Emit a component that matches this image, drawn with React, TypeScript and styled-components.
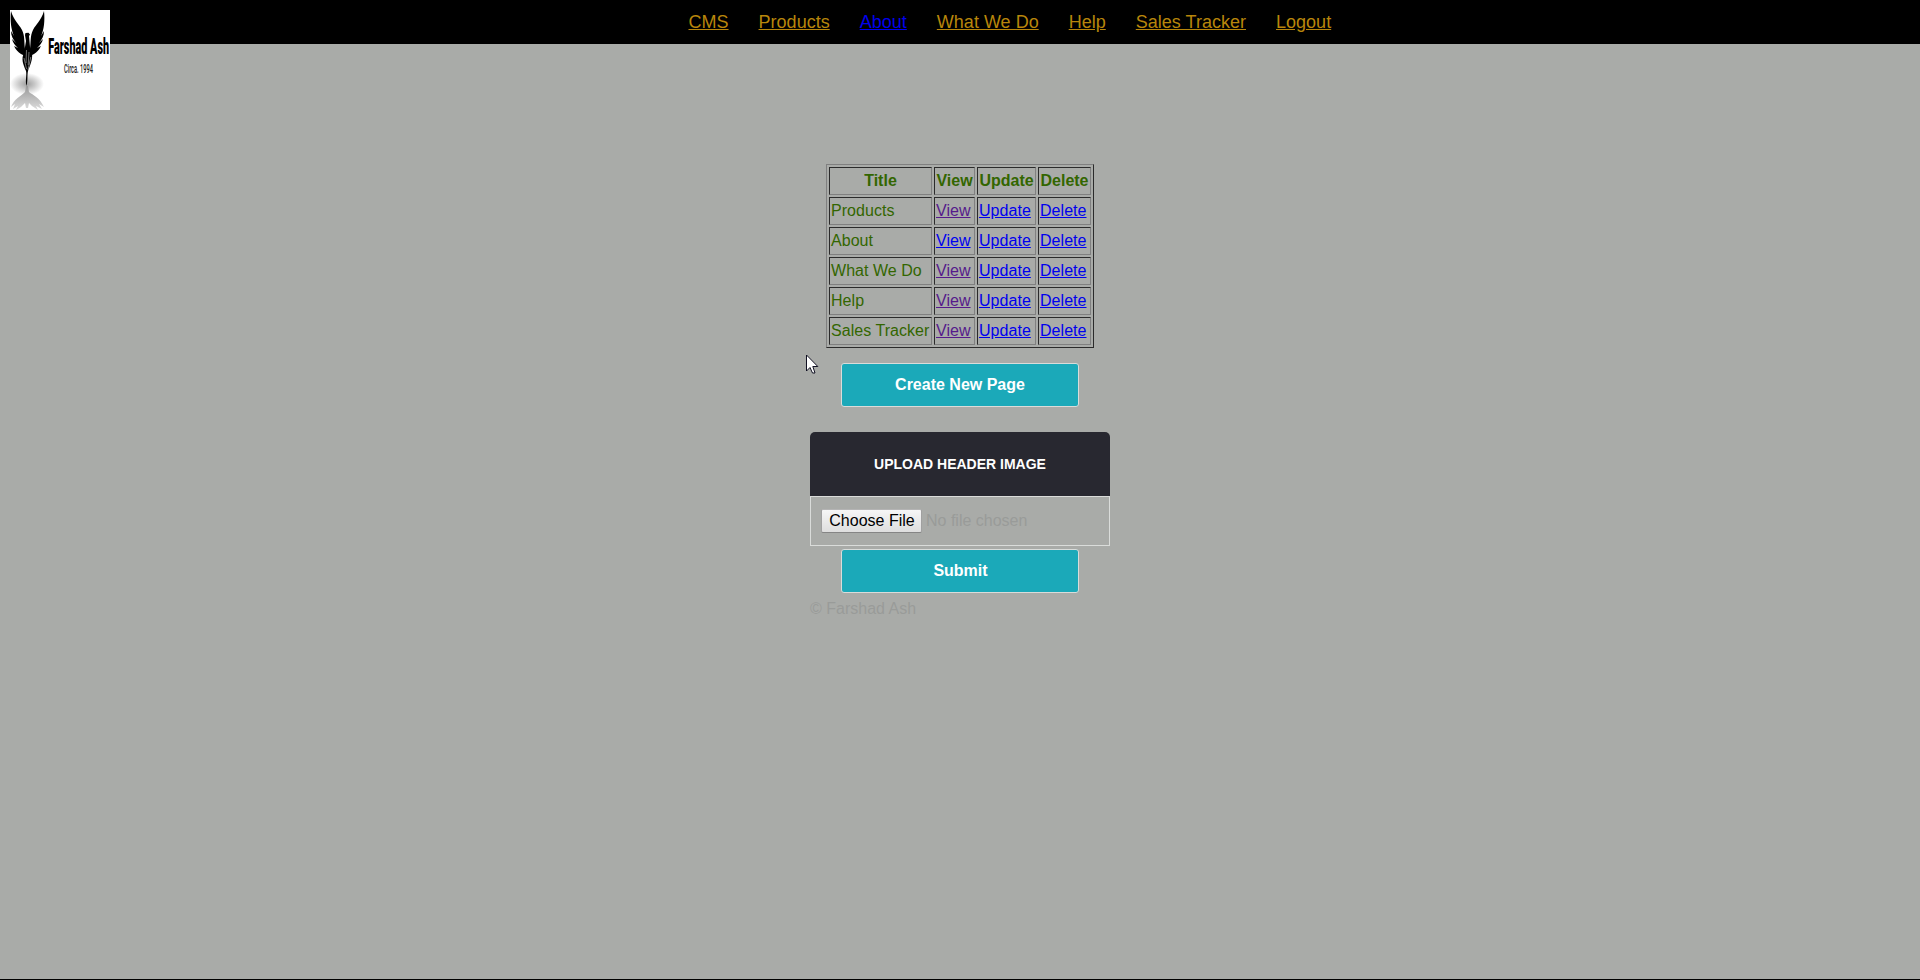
import React from "react";
import styled, { createGlobalStyle } from "styled-components";

const GlobalStyle = createGlobalStyle`
  html { background: #000; }
  body {
    margin: 0;
    font: 16px/24px "Liberation Sans", Arial, sans-serif;
    color: #999b99;
  }
`;

const Page = styled.div`
  position: relative;
  height: 979px;
  background: #a9aba8;
  overflow: hidden;
`;

const Header = styled.header`
  height: 44px;
  box-sizing: border-box;
  padding-left: 688.5px;
  background: #000;
`;

const Nav = styled.nav`
  display: flex;
  gap: 30px;
  font-size: 18px;
  line-height: 44px;
`;

const NavLink = styled.a<{ $active?: boolean }>`
  color: ${(p) => (p.$active ? "#0000ee" : "#b8860b")};
  text-decoration: underline;
  white-space: nowrap;
  letter-spacing: 0.015px;
`;

const Logo = styled.svg`
  position: absolute;
  left: 10px;
  top: 10px;
  width: 100px;
  height: 100px;
`;

const Main = styled.main`
  width: 300px;
  margin: 120px auto 0;
  display: flex;
  flex-direction: column;
  align-items: center;
`;

const Table = styled.table`
  border-collapse: separate;
  border-spacing: 2px;
  table-layout: fixed;
  width: 268px;
  border: 1px solid;
  border-color: #808080 #2b2b2b #2b2b2b #808080;
  color: #336600;
`;

const cellBorder = `
  padding: 1px;
  border: 1px solid;
  border-color: #2b2b2b #808080 #808080 #2b2b2b;
  line-height: 24px;
  white-space: nowrap;
`;

const HeadCell = styled.th<{ $width: number }>`
  ${cellBorder}
  box-sizing: border-box;
  width: ${(p) => p.$width}px;
  text-align: center;
`;

const Cell = styled.td`
  ${cellBorder}
  letter-spacing: 0.04px;
`;

const CellLink = styled.a<{ $visited?: boolean }>`
  color: ${(p) => (p.$visited ? "#551a8b" : "#0000ee")};
  text-decoration: underline;
`;

const Button = styled.button`
  box-sizing: border-box;
  width: 238px;
  height: 44px;
  padding: 0;
  border: 1px solid #dadcda;
  border-radius: 3px;
  background: #1ba9b9;
  color: #fff;
  font: bold 16px/24px "Liberation Sans", Arial, sans-serif;
`;

const CreateButton = styled(Button)`
  margin-top: 15px;
`;

const SubmitButton = styled(Button)`
  padding-left: 1px;
`;

const PanelTitle = styled.h2`
  width: 300px;
  height: 64px;
  margin: 25px 0 0;
  border-radius: 5px 5px 0 0;
  background: #282830;
  color: #fff;
  font-size: 14px;
  line-height: 64px;
  text-align: center;
  text-transform: uppercase;
`;

const FileField = styled.div`
  box-sizing: border-box;
  display: flex;
  align-items: flex-start;
  gap: 4px;
  width: 300px;
  height: 50px;
  margin-bottom: 3px;
  padding: 12px 10px;
  border: 1px solid #dadcda;
`;

const FileButton = styled.button`
  box-sizing: border-box;
  width: 101px;
  height: 24px;
  padding: 0 0 0 1px;
  border: 1px solid;
  border-color: #b4b4b4 #a0a0a0 #858585;
  border-radius: 2px;
  background: linear-gradient(#f6f6f6, #dedede);
  color: #000;
  font: 16px/20px "Liberation Sans", Arial, sans-serif;
  white-space: nowrap;
`;

const FileStatus = styled.span`
  line-height: 23px;
`;

const Footer = styled.footer`
  align-self: flex-start;
  margin-top: 4px;
`;

const Cursor = styled.svg`
  position: absolute;
  left: 806px;
  top: 354px;
  width: 13px;
  height: 21px;
`;

const links = ["CMS", "Products", "About", "What We Do", "Help", "Sales Tracker", "Logout"];
const pages = links.slice(1, -1);
const columns = [
  { label: "Title", width: 103 },
  { label: "View", width: 41 },
  { label: "Update", width: 59 },
  { label: "Delete", width: 53 },
];

const wingPath =
  "M1 1C4 11 9 14 12 20C15 26 14 32 15 39L15 46L11 44C8 42 6 40 4 36L8 38C5 35 3 33 2 29L6 33C3 29 1 26 1 21L4 26C1 20 0 10 1 1Z";

const Phoenix = () => (
  <g>
    <path d={wingPath} />
    <path d={wingPath} transform="matrix(-1 0 0 1 35 0)" />
    <path d="M15 25L15.5 23L18.5 22.8L20 24.5L19 26L20 37L22 42C23 50 20 55 18 61C17 66 18 70 16.5 76C15 70 17 66 16 61C13 54 11 49 14 43L16 31Z" />
  </g>
);

const BrandLogo = () => (
  <Logo viewBox="0 0 100 100" role="img" aria-label="Farshad Ash">
    <defs>
      <radialGradient id="shade">
        <stop offset="0" stopColor="#a0a0a0" />
        <stop offset=".45" stopColor="#c8c8c8" />
        <stop offset="1" stopColor="#fff" />
      </radialGradient>
      <linearGradient id="fade" x1="0" y1="0" x2="0" y2="1">
        <stop offset="0" stopColor="#999" />
        <stop offset="1" stopColor="#ddd" />
      </linearGradient>
    </defs>
    <rect width="100" height="100" fill="#fff" />
    <ellipse cx="17" cy="74" rx="17" ry="11" fill="url(#shade)" />
    <Phoenix />
    <path d="M16.5 40L16 53M19 42L18.2 55M14 48L16.5 59M20.8 47L18 60" stroke="#ddd" strokeWidth=".5" fill="none" />
    <path
      d="M16 76L18 76L19 82C23 85 30 88 34 97L29 94L32 99L26 96L28 100L22 96L19 93L18 98H16L15 93L11 97L6 100L8 96L3 99L5 94L1 97C4 89 11 86 15 82Z"
      fill="url(#fade)"
    />
    <g transform="translate(38.3 44) scale(.46 1)">
      <text textLength="132" lengthAdjust="spacingAndGlyphs" fontFamily="Roboto, sans-serif" fontSize="22.5" fontWeight="900">Farshad Ash</text>
    </g>
    <g transform="translate(54 63) scale(.46 1)">
      <text textLength="63" lengthAdjust="spacingAndGlyphs" fontFamily="Roboto, sans-serif" fontSize="12.5" fontWeight="500" fill="#222">Circa. 1994</text>
    </g>
  </Logo>
);

export default function App() {
  return (
    <Page>
      <GlobalStyle />
      <Header>
        <BrandLogo />
        <Nav>
          {links.map((l) => (
            <NavLink key={l} href="#" $active={l === "About"}>{l}</NavLink>
          ))}
        </Nav>
      </Header>
      <Main>
        <Table>
          <thead>
            <tr>
              {columns.map((c) => (
                <HeadCell key={c.label} $width={c.width}>{c.label}</HeadCell>
              ))}
            </tr>
          </thead>
          <tbody>
            {pages.map((p) => (
              <tr key={p}>
                <Cell>{p}</Cell>
                <Cell><CellLink href="#" $visited={p !== "About"}>View</CellLink></Cell>
                <Cell><CellLink href="#">Update</CellLink></Cell>
                <Cell><CellLink href="#">Delete</CellLink></Cell>
              </tr>
            ))}
          </tbody>
        </Table>
        <CreateButton>Create New Page</CreateButton>
        <PanelTitle>Upload Header Image</PanelTitle>
        <FileField>
          <FileButton>Choose File</FileButton>
          <FileStatus>No file chosen</FileStatus>
        </FileField>
        <SubmitButton>Submit</SubmitButton>
        <Footer>© Farshad Ash</Footer>
      </Main>
      <Cursor viewBox="0 0 13 21">
        <path d="M.5 1V17L4 13.5L6.5 19H9L6.8 12.5H11.8Z" fill="#fff" stroke="#111122" />
      </Cursor>
    </Page>
  );
}
